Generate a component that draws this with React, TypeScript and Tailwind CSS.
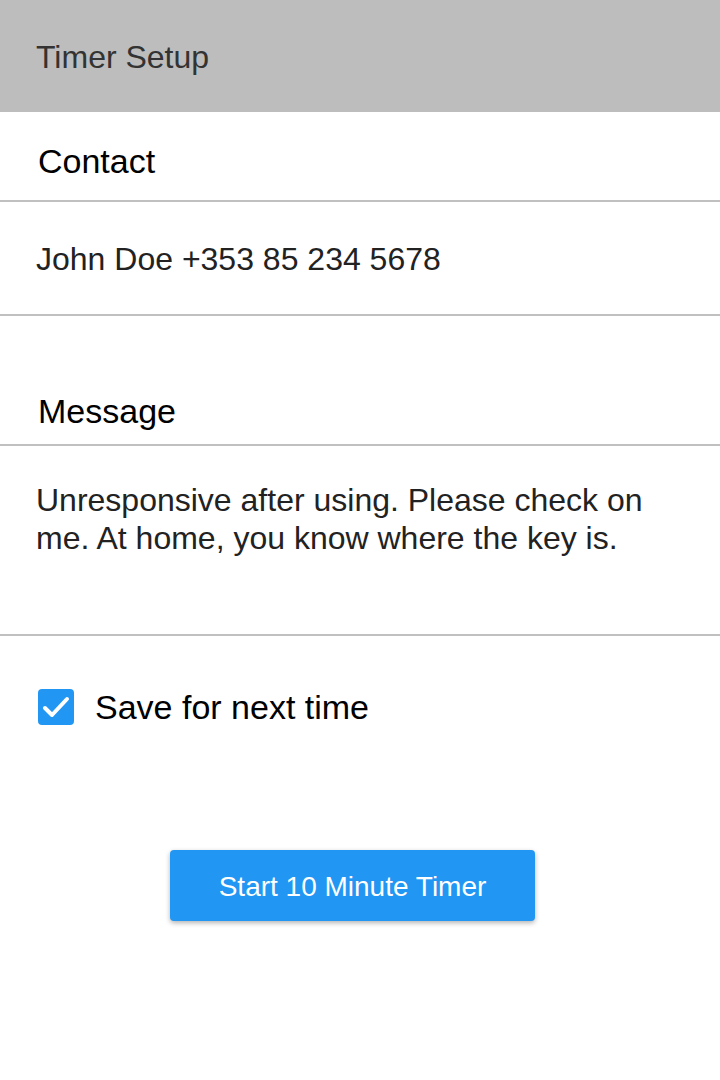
export default function App() {
  return (
    <div className="w-[720px] h-[1080px] bg-white font-['Liberation_Sans',Arial,sans-serif]">
      <header className="h-[112px] bg-[#bdbdbd] flex items-center pl-[36px]">
        <h1 className="text-[32px] leading-none text-[#333] pt-[2px]">Timer Setup</h1>
      </header>

      {/* Contact */}
      <div className="h-[90px] flex items-center pl-[38px] pt-[10px] border-b-2 border-[#c0c0c0]">
        <span className="text-[34px] leading-none text-black">Contact</span>
      </div>
      <div className="h-[114px] flex items-center pl-[36px] pt-[2px] border-b-2 border-[#c0c0c0]">
        <span className="text-[32px] leading-none text-[#222]">John Doe +353 85 234 5678</span>
      </div>

      {/* Message */}
      <div className="h-[130px] flex items-end pl-[38px] pb-[16px] border-b-2 border-[#c0c0c0]">
        <span className="text-[34px] leading-none text-black">Message</span>
      </div>
      <div className="h-[190px] pl-[36px] pr-[40px] pt-[35px] border-b-2 border-[#c0c0c0]">
        <p className="text-[32px] leading-[38px] text-[#222]">
          Unresponsive after using. Please check on me. At home, you know where the key is.
        </p>
      </div>

      <label className="flex items-center gap-[21px] pl-[38px] mt-[53px]">
        <span className="w-[36px] h-[36px] rounded-[4px] bg-[#2196f3] flex items-center justify-center">
          <svg width="36" height="36" viewBox="0 0 36 36" fill="none">
            <polyline points="7,19 14,26 29,10" stroke="white" strokeWidth="4" strokeLinecap="round" strokeLinejoin="round" />
          </svg>
        </span>
        <span className="text-[34px] leading-none text-black">Save for next time</span>
      </label>

      <div className="flex justify-center mt-[125px]">
        <button className="w-[365px] h-[71px] ml-[-15px] pt-[3px] rounded-[4px] bg-[#2196f3] text-white text-[28px] shadow-[0_2px_5px_rgba(0,0,0,0.3)]">
          Start 10 Minute Timer
        </button>
      </div>
    </div>
  );
}
